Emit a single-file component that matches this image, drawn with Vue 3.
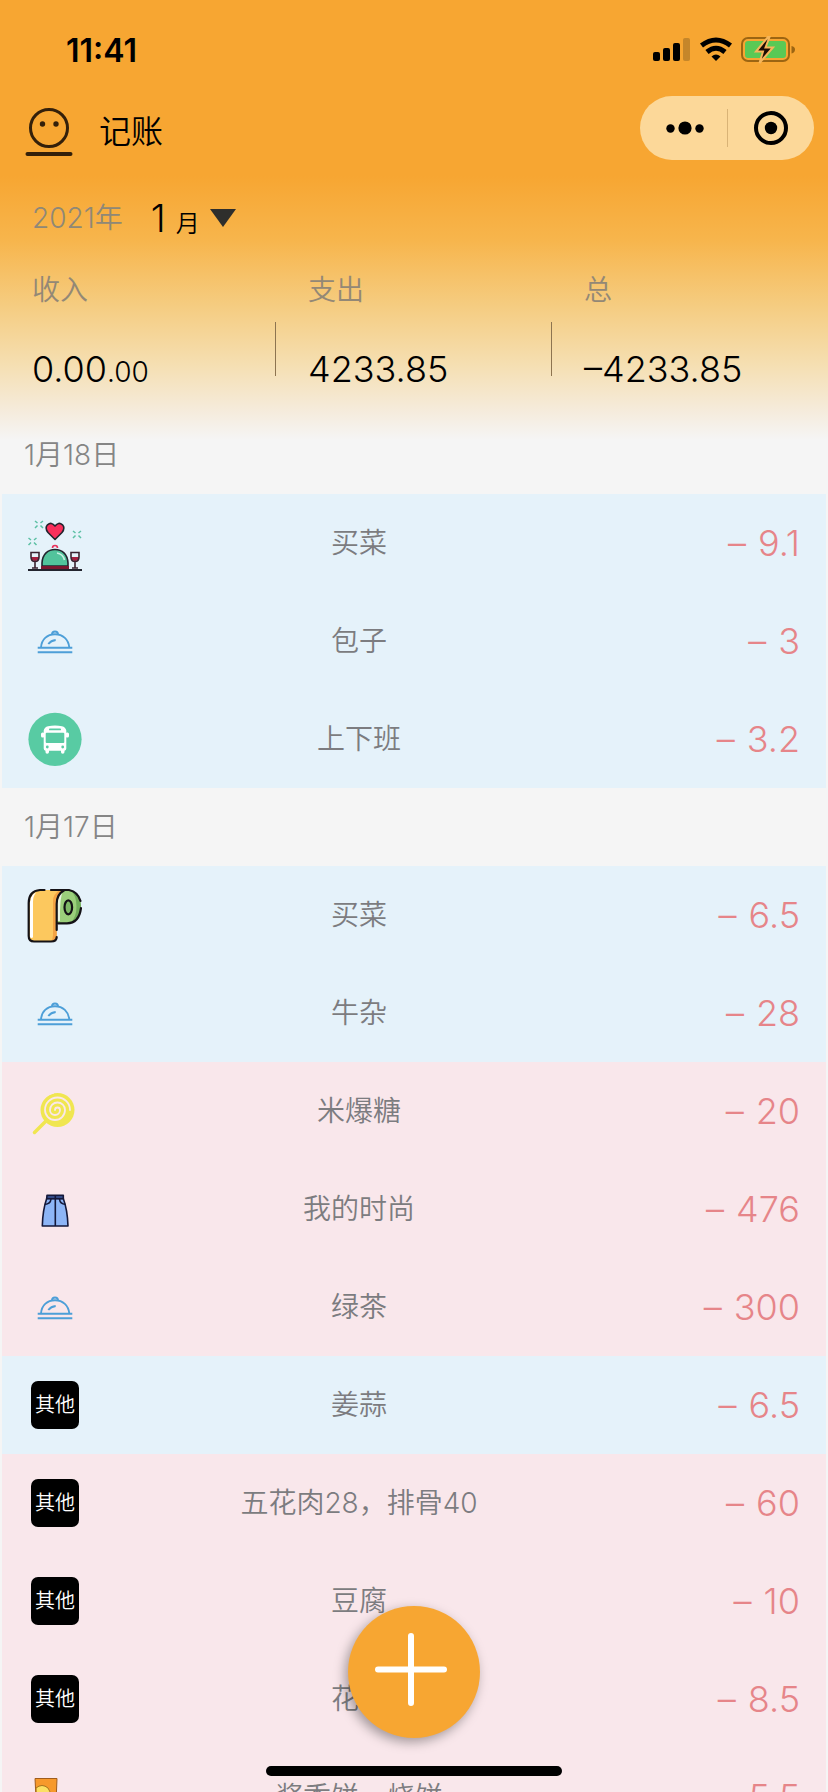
<script setup>
const summary = [
  { label: '收入', value: '0.00', cents: '.00' },
  { label: '支出', value: '4233.85', cents: '' },
  { label: '总', value: '–4233.85', cents: '' },
]

const groups = [
  {
    date: '1月18日',
    rows: [
      { icon: 'dinner', name: '买菜', amount: '9.1', tone: 'blue' },
      { icon: 'cloche', name: '包子', amount: '3', tone: 'blue' },
      { icon: 'bus', name: '上下班', amount: '3.2', tone: 'blue' },
    ],
  },
  {
    date: '1月17日',
    rows: [
      { icon: 'paper', name: '买菜', amount: '6.5', tone: 'blue' },
      { icon: 'cloche', name: '牛杂', amount: '28', tone: 'blue' },
      { icon: 'candy', name: '米爆糖', amount: '20', tone: 'pink' },
      { icon: 'skirt', name: '我的时尚', amount: '476', tone: 'pink' },
      { icon: 'cloche', name: '绿茶', amount: '300', tone: 'pink' },
      { icon: 'other', name: '姜蒜', amount: '6.5', tone: 'blue' },
      { icon: 'other', name: '五花肉28，排骨40', amount: '60', tone: 'pink' },
      { icon: 'other', name: '豆腐', amount: '10', tone: 'pink' },
      { icon: 'other', name: '花菜', amount: '8.5', tone: 'pink' },
      { icon: 'snack', name: '酱香饼，烧饼', amount: '5.5', tone: 'pink' },
    ],
  },
]
</script>

<template>
  <div class="page">
    <div class="status">
      <span class="time">11:41</span>
      <svg class="status-icons" viewBox="0 0 144 28" width="144" height="28" aria-hidden="true">
        <rect x="2" y="16" width="7" height="9" rx="2" />
        <rect x="12" y="12" width="7" height="13" rx="2" />
        <rect x="22" y="7" width="7" height="18" rx="2" />
        <rect x="32" y="2" width="7" height="23" rx="2" fill="#c5862a" />
        <g fill="none" stroke="#000" stroke-width="5">
          <path d="M50.500 9.500Q65 -1.500 79.500 9.500" />
          <path d="M56 16Q65 8.500 74 16" />
        </g>
        <path d="M60.500 20.500Q65 16.500 69.500 20.500L65 25Z" />
        <rect x="91" y="2" width="47" height="23" rx="6" fill="none" stroke="#9c6512" stroke-width="2" />
        <rect x="94" y="5" width="41" height="17" rx="3" fill="#5ac955" />
        <path d="M140.500 10Q144 10.500 144 13.500T140.500 17.500Z" fill="#9c6512" />
        <path d="M117 1L105 15.500H112L108.500 27L122 11.500H114.500L118.500 1Z" fill="#1c0c04" stroke="#f7b65a" stroke-width="2" />
      </svg>
    </div>

    <header class="nav">
      <svg class="face" viewBox="0 0 48 52" width="48" height="52" aria-hidden="true">
        <circle cx="24" cy="22" r="18.500" fill="none" stroke="#34200a" stroke-width="3" />
        <circle cx="17.500" cy="18" r="2.700" fill="#34200a" />
        <circle cx="31" cy="18" r="2.700" fill="#34200a" />
        <path d="M2.500 48H45.500" stroke="#34200a" stroke-width="4" stroke-linecap="round" />
      </svg>
      <h1 class="title">记账</h1>
      <div class="capsule">
        <button class="cap-btn" type="button" aria-label="更多">
          <svg viewBox="0 0 40 36" width="40" height="36">
            <circle cx="7.500" cy="18.500" r="4.200" />
            <circle cx="22" cy="18" r="6.600" />
            <circle cx="36.500" cy="18.500" r="4.200" />
          </svg>
        </button>
        <span class="cap-rule"></span>
        <button class="cap-btn" type="button" aria-label="关闭">
          <svg viewBox="0 0 36 36" width="36" height="36">
            <circle cx="18" cy="18" r="15" fill="none" stroke="#000" stroke-width="4" />
            <circle cx="18" cy="18" r="6.200" />
          </svg>
        </button>
      </div>
    </header>

    <div class="period">
      <span class="year">2021年</span>
      <button class="month" type="button">
        <span class="month-num">1</span>
        <span class="month-unit">月</span>
        <svg viewBox="0 0 26 18" width="26" height="18" aria-hidden="true"><path d="M0 0H26L13 18Z" fill="#2e2e2c" /></svg>
      </button>
    </div>

    <section class="summary">
      <div v-for="item in summary" :key="item.label" class="sum">
        <div class="sum-text">
          <span class="sum-label">{{ item.label }}</span>
          <span class="sum-value">{{ item.value }}<small v-if="item.cents">{{ item.cents }}</small></span>
        </div>
      </div>
    </section>

    <main class="list">
      <section v-for="group in groups" :key="group.date">
        <h2 class="date">{{ group.date }}</h2>
        <ul class="rows">
          <li v-for="(row, i) in group.rows" :key="i" class="row" :class="row.tone">
            <span v-if="row.icon === 'other'" class="icon"><span class="badge">其他</span></span>
            <svg v-else class="icon" viewBox="0 0 56 56" aria-hidden="true">
              <g v-if="row.icon === 'dinner'">
                <g stroke="#5cc0a4" stroke-width="1.500" fill="none">
                  <path d="M8 6L10.500 8M16 6L13.500 8M8 13L10.500 10.500M16 13L13.500 10.500" />
                  <path d="M46 16L48.500 18M54 16L51.500 18M46 23L48.500 20.500M54 23L51.500 20.500" />
                  <path d="M1.500 23L4 25M9.500 23L7 25M1.500 30L4 27.500M9.500 30L7 27.500" />
                </g>
                <path d="M28 24.500L21 17.500Q17.500 13 20.500 9.800Q24.500 6.500 28 11Q31.500 6.500 35.500 9.800Q38.500 13 35 17.500Z" fill="#f92f5b" stroke="#22242e" stroke-width="1.600" stroke-linejoin="round" />
                <path d="M25.500 33Q25.500 30.500 28 30.500T30.500 33" fill="none" stroke="#e8325c" stroke-width="1.600" />
                <path d="M15 51V48C15.500 39 21 34.500 28 34.500S40.500 39 41 48V51Z" fill="#52c39c" stroke="#22242e" stroke-width="1.600" />
                <path d="M30 38Q36 39 37.500 45" fill="none" stroke="#c7f0e2" stroke-width="1.700" />
                <rect x="14" y="51" width="28" height="3.500" fill="#7c1730" />
                <path d="M1 55H55" stroke="#22242e" stroke-width="1.800" />
                <g v-for="x in [0, 40]" :key="x">
                  <path :d="`M${x + 4} 42H${x + 12}V43Q${x + 11} 46 ${x + 8} 46T${x + 4} 43Z`" fill="#a31f40" />
                  <path :d="`M${x + 4} 37.500H${x + 12}V42Q${x + 12} 46.500 ${x + 8} 46.500T${x + 4} 42ZM${x + 8} 46.500V53M${x + 5} 53H${x + 11}`" fill="none" stroke="#3a2230" stroke-width="1.600" />
                </g>
              </g>
              <g v-else-if="row.icon === 'cloche'" fill="none" stroke="#4d9fd8" stroke-width="1.900">
                <path d="M14 34.500C14.500 26.500 20 21.300 28 21.300S41.500 26.500 42.300 34.500" />
                <path d="M25 21.500Q25 18.500 28 18.500T31 21.500" />
                <path d="M21.300 31Q24 27.500 28.700 27" />
                <path d="M10.700 34.800H45.300M10.700 39.300H45.300" />
              </g>
              <g v-else-if="row.icon === 'bus'">
                <circle cx="28" cy="28.300" r="26.600" fill="#58cba3" />
                <g fill="#fff">
                  <path d="M21 15.200Q28 14 35 15.200Q38.500 16 39.300 19.500V37.500Q39.300 39.500 37.500 39.700V41Q37.500 42.800 35.700 42.800T34 41V39.800H22V41Q22 42.800 20.200 42.800T18.500 41V39.700Q16.700 39.500 16.700 37.500V19.500Q17.500 16 21 15.200Z" />
                  <rect x="14" y="21.500" width="3.500" height="5" rx="1.500" />
                  <rect x="38.500" y="21.500" width="3.500" height="5" rx="1.500" />
                </g>
                <g fill="#58cba3">
                  <rect x="22" y="17.500" width="12" height="1.800" rx="0.900" />
                  <rect x="18.700" y="21.700" width="18.600" height="10.300" rx="1" />
                  <circle cx="20.300" cy="36" r="1.400" />
                  <circle cx="35.700" cy="36" r="1.400" />
                </g>
              </g>
              <g v-else-if="row.icon === 'paper'">
                <path d="M33 3H44Q54 6 54 19.500T43 36.300H30V12Z" fill="#9bcf7b" />
                <path d="M43 3Q54 6 54 19.500T43 36.300Q49.500 31 49.500 19.500T43 3Z" fill="#72ad5b" />
                <path d="M30 34V16Q31 8 35 6Q33 14 33 23V34Z" fill="#eaf5e4" />
                <path d="M12 3H37Q30 7 29.700 15V50Q29.700 54.500 25 54.500H6Q1.700 54.500 1.700 50V15Q2 5 12 3Z" fill="#fcc85e" />
                <path d="M33 3H37Q30 7 29.700 15V50Q29 54 24 54.500Q26 52 26 48V14Q26 7 33 3Z" fill="#f3a344" />
                <path d="M3 48V15Q4 7 9 5.500Q6 9 6 15V50Q5 52 3 50Z" fill="#fff" />
                <g fill="none" stroke="#141216" stroke-width="2.200" stroke-linecap="round">
                  <path d="M17.500 3H13Q1.700 4 1.700 16V49Q1.700 54.500 7 54.500H24Q29.700 54.500 29.700 50" />
                  <path d="M24 3H42Q51 5 53.500 14M54 21Q52 36.300 40 36.300H31" />
                  <path d="M37 3.500Q29.700 7 29.700 17V43" />
                  <ellipse cx="41.300" cy="20.300" rx="3.800" ry="7" fill="#7eb866" />
                </g>
              </g>
              <g v-else-if="row.icon === 'candy'">
                <path d="M7.500 49.500L20 37" stroke="#f0e650" stroke-width="3.500" stroke-linecap="round" />
                <circle cx="30.500" cy="27" r="17" fill="#f0e650" />
                <path d="M28 27A2.500 2.500 0 0 1 33 27A5 5 0 0 1 23 27A7.500 7.500 0 0 1 38 27A10 10 0 0 1 18 27A12.500 12.500 0 0 1 43 27" fill="none" stroke="#fae7ea" stroke-width="1.800" stroke-linecap="round" />
                <path d="M13 22Q17 12 27 10" fill="none" stroke="#fae7ea" stroke-width="1.200" />
              </g>
              <g v-else-if="row.icon === 'skirt'" stroke="#15193a" stroke-width="1.600" stroke-linejoin="round">
                <path d="M19.700 17.500H36.300Q40.500 29 41 45H15.300Q15.700 29 19.700 17.500Z" fill="#8db5f6" />
                <path d="M20 14.300H36.300V17.700H19.700Z" fill="#334a86" />
                <path d="M24 18Q23.500 23 17.800 23.500M32.500 18Q33 23 38.500 23.500M28.300 14V45" fill="none" />
              </g>
              <g v-else>
                <path d="M8 9.500H30L28.500 48H10Z" fill="#f7992b" stroke="#a05c1c" stroke-width="1" />
                <path d="M9 19Q15 14 21 19Q25 24 24 30H9.500Z" fill="#fce063" stroke="#a8741e" stroke-width="1" />
              </g>
            </svg>
            <span class="name">{{ row.name }}</span>
            <span class="amount"><span>–</span><span>{{ row.amount }}</span></span>
          </li>
        </ul>
      </section>
    </main>

    <button class="add" type="button" aria-label="添加">
      <svg viewBox="0 0 132 132" width="132" height="132">
        <path d="M30 63.500H96M63 30V97" stroke="#fff" stroke-width="6" stroke-linecap="round" />
      </svg>
    </button>
    <div class="home"></div>
  </div>
</template>

<style>
body {
  background: #f5f5f5;
}
</style>

<style scoped>
* {
  box-sizing: border-box;
}
.page {
  display: flex;
  flex-direction: column;
  height: 100vh;
  overflow: hidden;
  background: linear-gradient(#f7a632 0, #f7a632 176px, #f7b54c 240px, #f5cc80 305px, #f5dfb2 365px, #f5ebdb 410px, #f5f5f5 440px);
  color: #000;
  font-family: Inter, "Noto Sans CJK SC", sans-serif;
  font-weight: 350;
}
button {
  padding: 0;
  border: 0;
  background: none;
  color: inherit;
  font: inherit;
}
svg {
  display: block;
}
.status {
  display: flex;
  flex: none;
  align-items: center;
  justify-content: space-between;
  height: 88px;
  padding: 12px 33px 0 66px;
}
.time {
  font-size: 32px;
  font-weight: 600;
}
.nav {
  display: flex;
  flex: none;
  align-items: center;
  height: 80px;
  padding: 0 14px 0 25px;
}
.face {
  margin-top: 8px;
}
.title {
  flex: 1;
  margin: 8px 0 0 26px;
  font-size: 32px;
  font-weight: 350;
  line-height: 40px;
}
.capsule {
  display: flex;
  align-items: center;
  width: 174px;
  height: 64px;
  border-radius: 32px;
  background: #fcd899;
}
.cap-btn {
  display: flex;
  flex: 1;
  justify-content: center;
}
.cap-btn svg {
  overflow: visible;
}
.cap-rule {
  width: 1px;
  height: 38px;
  background: #d9b376;
}
.period {
  display: flex;
  flex: none;
  align-items: center;
  gap: 28px;
  margin-top: 18px;
  height: 64px;
  padding: 0 32px;
}
.year {
  color: #8f8877;
  font-size: 28px;
  line-height: 40px;
}
.month {
  display: flex;
  align-items: center;
  gap: 10px;
}
.month-num {
  font-size: 38px;
}
.month-unit {
  margin-top: 6px;
  font-size: 24px;
}
.summary {
  display: grid;
  flex: none;
  grid-template-columns: repeat(3, 1fr);
  margin-top: 20px;
  padding-bottom: 27px;
}
.sum {
  display: flex;
  align-items: flex-end;
  justify-content: space-between;
}
.sum:not(:last-child)::after {
  width: 1px;
  height: 54px;
  margin-bottom: 13px;
  background: #8d7450;
  content: "";
}
.sum-text {
  display: flex;
  flex-direction: column;
  gap: 39px;
  padding-left: 32px;
}
.sum-label {
  color: #938876;
  font-size: 28px;
  line-height: 40px;
}
.sum-value {
  font-size: 36px;
  line-height: 40px;
}
.sum-value small {
  font-size: 28px;
  line-height: 1;
}
.list {
  flex: 1;
  min-height: 0;
  overflow-y: auto;
  scrollbar-width: none;
}
.date {
  margin: 0;
  padding: 0 24px;
  color: #858585;
  font-size: 28px;
  font-weight: 350;
  line-height: 78px;
}
.rows {
  margin: 0;
  padding: 0 2px;
  list-style: none;
}
.row {
  display: grid;
  grid-template-columns: 106px 1fr 216px;
  align-items: center;
  height: 98px;
}
.blue {
  background: #e5f2fa;
}
.pink {
  background: #f9e7eb;
}
.icon {
  display: flex;
  align-items: center;
  justify-content: center;
  width: 56px;
  height: 56px;
  margin-left: 25px;
}
.badge {
  width: 48px;
  height: 48px;
  border-radius: 7px;
  background: #000;
  color: #fff;
  font-size: 20px;
  line-height: 48px;
  text-align: center;
}
.name {
  color: #7c7c80;
  font-size: 28px;
  line-height: 40px;
  text-align: center;
}
.amount {
  display: flex;
  justify-content: flex-end;
  gap: 12px;
  padding-right: 26px;
  color: #e68589;
  font-size: 36px;
  font-weight: 300;
}
.add {
  position: fixed;
  bottom: 54px;
  left: calc(50% - 66px);
  width: 132px;
  height: 132px;
  border-radius: 50%;
  background: #f7a632;
  box-shadow: -3px 4px 12px rgba(0, 0, 0, 0.35);
}
.home {
  position: fixed;
  bottom: 16px;
  left: calc(50% - 148px);
  width: 296px;
  height: 10px;
  border-radius: 5px;
  background: #000;
}
</style>
